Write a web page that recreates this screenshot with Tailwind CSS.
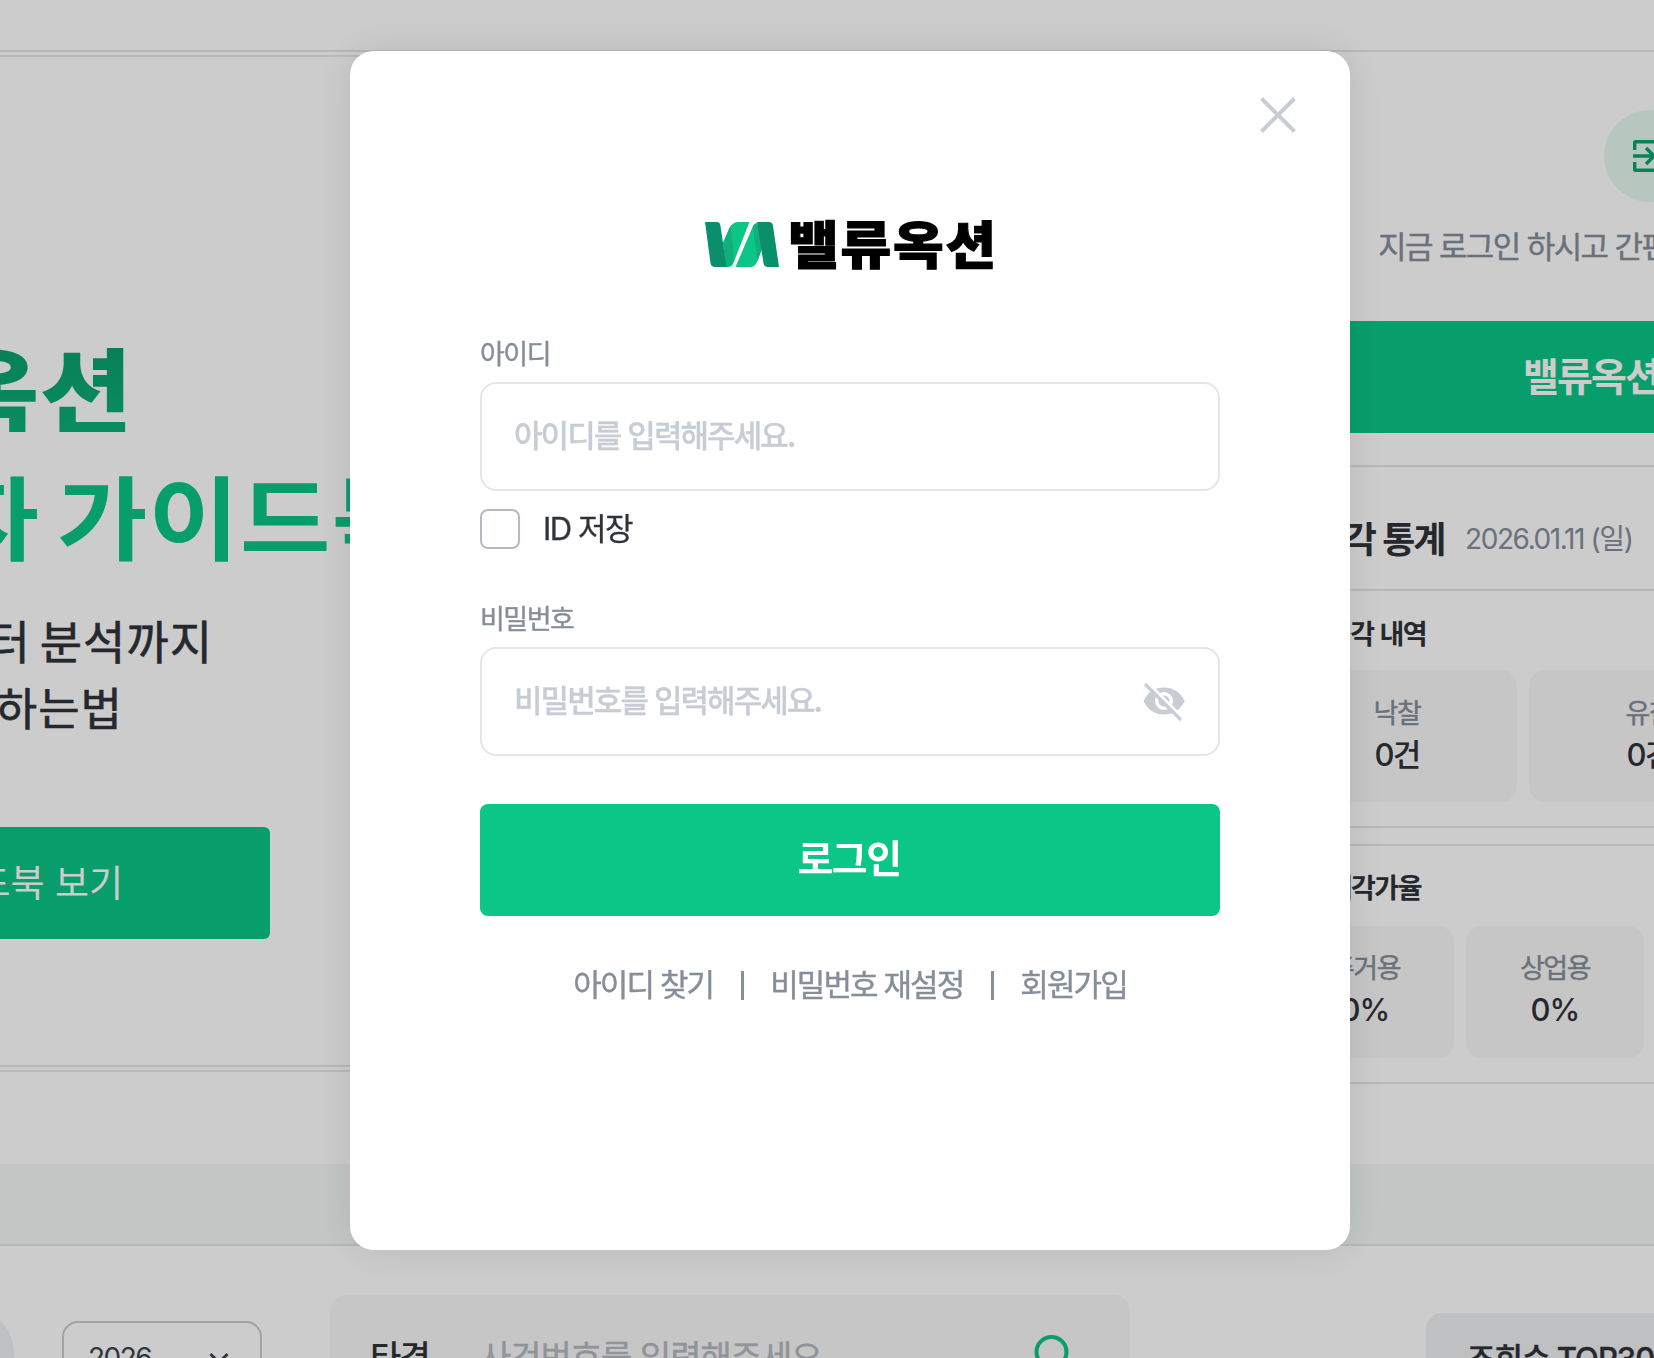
<!DOCTYPE html>
<html lang="ko">
<head>
    <meta charset="UTF-8">
    <meta name="viewport" content="width=device-width, initial-scale=1.0">
    <title>밸류옥션 - 로그인</title>
    <script src="https://cdn.jsdelivr.net/npm/@tailwindcss/browser@4"></script>
</head>
<body class="bg-white text-[#2f3238] font-['Noto_Sans_CJK_KR',sans-serif] overflow-hidden">
    <div class="w-[1654px] h-[1358px] overflow-hidden">
        <!-- Header -->
        <header class="h-[52px] border-b-2 border-[#e6e6e6]"></header>

        <main class="flex h-[1112px]">
            <!-- Banner -->
            <section class="w-[1300px] h-[1020px] pt-[3px] pb-[3px] border-b-2 border-[#e6e6e6]">
                <div class="h-[1012px] border-y-2 border-[#e6e6e6] pt-[279px]">
                    <div class="flex justify-end w-[133px] h-[100px] items-center whitespace-nowrap text-[92px] leading-none font-black"><span class="inline-block origin-right scale-x-[1.1] bg-linear-to-b from-[#0a9f6c] to-[#0bb079] bg-clip-text text-transparent">밸류옥션</span></div>
                    <div class="flex justify-end w-[423px] h-[100px] mt-[27px] items-center whitespace-nowrap text-[91px] leading-none font-bold"><span class="inline-block origin-right scale-x-[1.08] tracking-[1.1px] [word-spacing:-11px] text-[#0bc686]">투자자 가이드북</span></div>
                    <div class="flex justify-end w-[213px] h-[60px] mt-[46px] items-center whitespace-nowrap text-[46px] leading-none tracking-[1px] [word-spacing:-5px] [-webkit-text-stroke:0.6px_#2f3238]">기초부터 분석까지</div>
                    <div class="flex justify-end w-[123px] h-[60px] mt-[7px] items-center whitespace-nowrap text-[45px] leading-none tracking-[1px] [-webkit-text-stroke:0.6px_#2f3238]">쉽게 하는법</div>
                    <div class="flex justify-end items-center w-[270px] h-[112px] mt-[91px] pr-[147px] pb-1 rounded-r-md bg-[#0bc686] text-white whitespace-nowrap text-[37px] leading-none">가이드북 보기</div>
                </div>
            </section>

            <!-- Login and stats -->
            <aside class="w-[354px]">
                <div class="h-[415px] border-b-2 border-[#e6e6e6] pt-[58px] overflow-hidden">
                    <div class="ml-[304px] w-[92px] h-[92px] rounded-full bg-[#e5f9f1] flex items-center justify-center">
                        <svg class="w-[46px] h-[46px]" viewBox="0 0 46 46" fill="none" stroke="#0aa470" stroke-width="3.4">
                            <path d="M7.7 17V9.500q0-.8.8-.8h29q.8 0 .8.8v27q0 .8-.8.8h-29q-.8 0-.8-.8V29M6 23h21M19 15l8 8-8 8" />
                        </svg>
                    </div>
                    <p class="mt-[26px] ml-[78px] h-[34px] whitespace-nowrap text-[31px] leading-[34px] tracking-[-1.6px] text-[#858e99] [-webkit-text-stroke:0.4px_#858e99]">지금 로그인 하시고 간편하게</p>
                    <div class="mt-[59px] h-[112px] w-[700px] bg-[#0bc686] pl-[223px] text-white font-bold text-[39px] leading-[106px] tracking-[-1.9px]">밸류옥션 로그인</div>
                </div>
                <div class="h-[124px] border-b-2 border-[#e6e6e6] pt-[20px] flex items-center overflow-hidden">
                    <h2 class="w-[144px] flex justify-end shrink-0 whitespace-nowrap text-[36px] leading-[50px] font-bold tracking-[-2.3px] pb-[3px]">매각 통계</h2>
                    <span class="ml-[21px] whitespace-nowrap pt-px text-[28px] tracking-[-1.4px] text-[#858e99] font-['Inter','Noto_Sans_CJK_KR',sans-serif]">2026.01.11 (일)</span>
                </div>
                <div class="h-[237px] border-b-2 border-[#e6e6e6] pt-[25px]">
                    <h3 class="w-[126px] h-[34px] flex justify-end whitespace-nowrap text-[27px] leading-[34px] font-bold tracking-[-1.6px]">매각 내역</h3>
                    <div class="flex gap-3 mt-[20px] w-[445px] -ml-[23px] text-center">
                        <div class="w-[240px] shrink-0 h-[132px] rounded-2xl bg-[#f8f8f8] pt-[25px]">
                            <div class="text-[27px] leading-[34px] tracking-[-1.3px] text-[#858e99] [-webkit-text-stroke:0.4px_#858e99]">낙찰</div>
                            <div class="mt-[9px] text-[31px] leading-[34px] tracking-[-1.8px] font-medium font-['Inter','Noto_Sans_CJK_KR',sans-serif]">0건</div>
                        </div>
                        <div class="w-[240px] shrink-0 h-[132px] rounded-2xl bg-[#f8f8f8] pt-[25px]">
                            <div class="text-[27px] leading-[34px] tracking-[-1.3px] text-[#858e99] [-webkit-text-stroke:0.4px_#858e99]">유찰</div>
                            <div class="mt-[9px] text-[31px] leading-[34px] tracking-[-1.8px] font-medium font-['Inter','Noto_Sans_CJK_KR',sans-serif]">0건</div>
                        </div>
                    </div>
                </div>
                <div class="mt-[16px] h-[240px] border-y-2 border-[#e6e6e6] pt-[24px]">
                    <h3 class="w-[121px] h-[34px] flex justify-end whitespace-nowrap text-[27px] leading-[34px] font-bold tracking-[-1.5px]">매각가율</h3>
                    <div class="flex gap-3 mt-[22px] -ml-[24px] text-center">
                        <div class="w-[178px] shrink-0 h-[132px] rounded-2xl bg-[#f8f8f8] pt-[24px]">
                            <div class="text-[27px] leading-[34px] tracking-[-1.5px] text-[#858e99] [-webkit-text-stroke:0.4px_#858e99]">주거용</div>
                            <div class="mt-[9px] text-[31px] leading-[34px] tracking-[-1px] font-medium font-['Inter',sans-serif]">0%</div>
                        </div>
                        <div class="w-[178px] shrink-0 h-[132px] rounded-2xl bg-[#f8f8f8] pt-[24px]">
                            <div class="text-[27px] leading-[34px] tracking-[-1.5px] text-[#858e99] [-webkit-text-stroke:0.4px_#858e99]">상업용</div>
                            <div class="mt-[9px] text-[31px] leading-[34px] tracking-[-1px] font-medium font-['Inter',sans-serif]">0%</div>
                        </div>
                    </div>
                </div>
            </aside>
        </main>

        <div class="h-[82px] bg-[#f3f8f6] border-b-2 border-[#e6e6e6]"></div>

        <!-- Search -->
        <section class="flex items-start h-[140px] overflow-hidden">
            <div class="-ml-[200px] mt-[60px] w-[214px] h-[96px] rounded-full bg-[#eff0f3] shrink-0"></div>
            <div class="ml-[48px] mt-[75px] w-[200px] h-[84px] shrink-0 rounded-2xl border-2 border-[#c8cbcf] flex justify-between pl-[24px] pr-[31px] pt-[18px]">
                <span class="font-['Inter',sans-serif] text-[28px] leading-[34px] tracking-[-1.5px] text-[#3a4352]">2026</span>
                <svg class="w-[20px] h-[14px] mt-[11px]" viewBox="0 0 20 14" fill="none" stroke="#3a4352" stroke-width="3"><path d="M1.500 2l8.500 8.500L18.500 2" /></svg>
            </div>
            <div class="ml-[68px] mt-[49px] w-[800px] h-[100px] shrink-0 rounded-2xl bg-[#f8f8f8] flex pl-[40px] pt-[39px] text-[34px] leading-[44px]">
                <span class="w-[110px] font-medium tracking-[-1.9px]">타경</span>
                <span class="w-[553px] tracking-[-1px] text-[#b5b9bf] [-webkit-text-stroke:0.4px_#b5b9bf]">사건번호를 입력해주세요</span>
                <svg class="w-[44px] h-[44px]" viewBox="0 0 44 44" fill="none" stroke="#0bc686" stroke-width="4"><circle cx="18.500" cy="18" r="15" /><path d="M29 29l11 11" /></svg>
            </div>
            <div class="ml-[296px] mt-[67px] w-[400px] h-[100px] shrink-0 rounded-2xl bg-[#eff0f3] pl-[41px] pt-[26px] whitespace-nowrap text-[31px] leading-[40px] font-medium tracking-[-1px] font-['Inter','Noto_Sans_CJK_KR',sans-serif] [-webkit-text-stroke:0.4px_#2f3238]">조회수 TOP30</div>
        </section>
    </div>

    <!-- Login modal -->
    <div class="fixed inset-0 bg-black/20 overflow-hidden">
        <form class="ml-[350px] mt-[51px] w-[1000px] h-[1199px] rounded-3xl bg-white shadow-[0_0_40px_rgba(0,0,0,0.1)] px-[130px] pt-[46px]">
            <div class="flex justify-end -mr-[76px]">
                <button type="button" aria-label="닫기">
                    <svg class="block w-[36px] h-[36px]" viewBox="0 0 36 36" fill="none" stroke="#c8ccd4" stroke-width="4"><path d="M1.500 1.500l33 33M34.500 1.500l-33 33" /></svg>
                </button>
            </div>

            <!-- Logo -->
            <div class="flex items-center h-[50px] mt-[87px] ml-[225px]">
                <svg class="w-[75px] h-[46px] shrink-0" viewBox="0 0 75 46">
                    <path d="M18 21L24.500 6Q27 0.500 33 0H44.500L28 42Q26.500 45 22 45H21Z" fill="#0bc686" />
                    <path d="M52 1L58 24L52 40Q50 45 45 45H30.500L48 4Q49.500 1 52 1Z" fill="#0bc686" />
                    <path d="M18 21L24.500 6L26 4.500L29 38L27 43Q25 45 21 45Z" fill="#10b07c" />
                    <path d="M52 1L58 24L52.500 39L48 4Z" fill="#10b07c" />
                    <path d="M0 0H12Q15 0 15.500 4L21.500 45H10Q6 45 5.500 41Z" fill="#0a8f6c" />
                    <path d="M52 0H64Q67.500 0 68 4L74 45H63Q59 45 58.500 41Z" fill="#0a8f6c" />
                </svg>
                <span class="inline-block origin-left scale-x-[1.07] ml-[8px] pb-[6px] whitespace-nowrap text-[51.5px] leading-[50px] font-black tracking-[1.7px] text-black [-webkit-text-stroke:1.1px_#000]">밸류옥션</span>
            </div>

            <label for="user-id" class="block mt-[66px] h-[34px] text-[27px] leading-[34px] tracking-[-1.5px] text-[#858e99] [-webkit-text-stroke:0.4px_#858e99]">아이디</label>
            <input id="user-id" type="text" placeholder="아이디를 입력해주세요."
                class="block mt-[12px] w-[740px] h-[109px] rounded-2xl border-2 border-[#e6e6e6] px-[32px] pb-[6px] text-[31px] tracking-[-1.9px] font-medium placeholder:text-[#c8ccd4] [-webkit-text-stroke:0.3px_#c8ccd4]">
            <div class="flex items-center mt-[18px] h-[40px]">
                <span class="w-[40px] h-[40px] rounded-lg border-2 border-[#b5bac2]"></span>
                <span class="ml-[23px] text-[31px] leading-[40px] tracking-[-1.5px] font-['Inter','Noto_Sans_CJK_KR',sans-serif] [-webkit-text-stroke:0.3px_#2f3238]">ID 저장</span>
            </div>

            <label for="user-pw" class="block mt-[52px] h-[34px] text-[27px] leading-[34px] tracking-[-1.5px] text-[#858e99] [-webkit-text-stroke:0.4px_#858e99]">비밀번호</label>
            <div class="flex items-center mt-[12px] w-[740px] h-[109px] rounded-2xl border-2 border-[#e6e6e6] pl-[32px] pr-[31px]">
                <input id="user-pw" type="password" placeholder="비밀번호를 입력해주세요."
                    class="flex-1 h-[100px] pb-[6px] text-[31px] tracking-[-1.9px] font-medium placeholder:text-[#c8ccd4] [-webkit-text-stroke:0.3px_#c8ccd4]">
                <svg class="w-[46px] h-[46px]" viewBox="0 0 46 46" fill="none">
                    <path d="M2.500 22Q9 8.500 23 8.500T43.700 22Q37 35.500 23 35.500T2.500 22Z" fill="#c8ccd4" />
                    <circle cx="23" cy="22" r="7.300" stroke="#fff" stroke-width="3.400" />
                    <path d="M6 3l37 37" stroke="#fff" stroke-width="3" />
                    <path d="M4 5l36 36" stroke="#c8ccd4" stroke-width="3.200" />
                </svg>
            </div>

            <button type="button" class="block mt-[48px] w-[740px] h-[112px] rounded-lg bg-[#0bc686] pb-[7px] pr-[2px] text-white text-[39px] leading-[105px] font-bold tracking-[-1.5px]">로그인</button>

            <!-- Account links -->
            <div class="flex items-center justify-center h-[40px] mt-[49px] text-[31px] leading-[40px] tracking-[-1.9px] text-[#858e99] [-webkit-text-stroke:0.4px_#858e99]">
                <a class="pb-[4px]">아이디 찾기</a>
                <span class="ml-[28px] mr-[26px] w-[3px] h-[29px] bg-[#858e99]"></span>
                <a class="pb-[4px]">비밀번호 재설정</a>
                <span class="ml-[28px] mr-[26px] w-[3px] h-[29px] bg-[#858e99]"></span>
                <a class="pb-[4px]">회원가입</a>
            </div>
        </form>
    </div>
</body>
</html>
